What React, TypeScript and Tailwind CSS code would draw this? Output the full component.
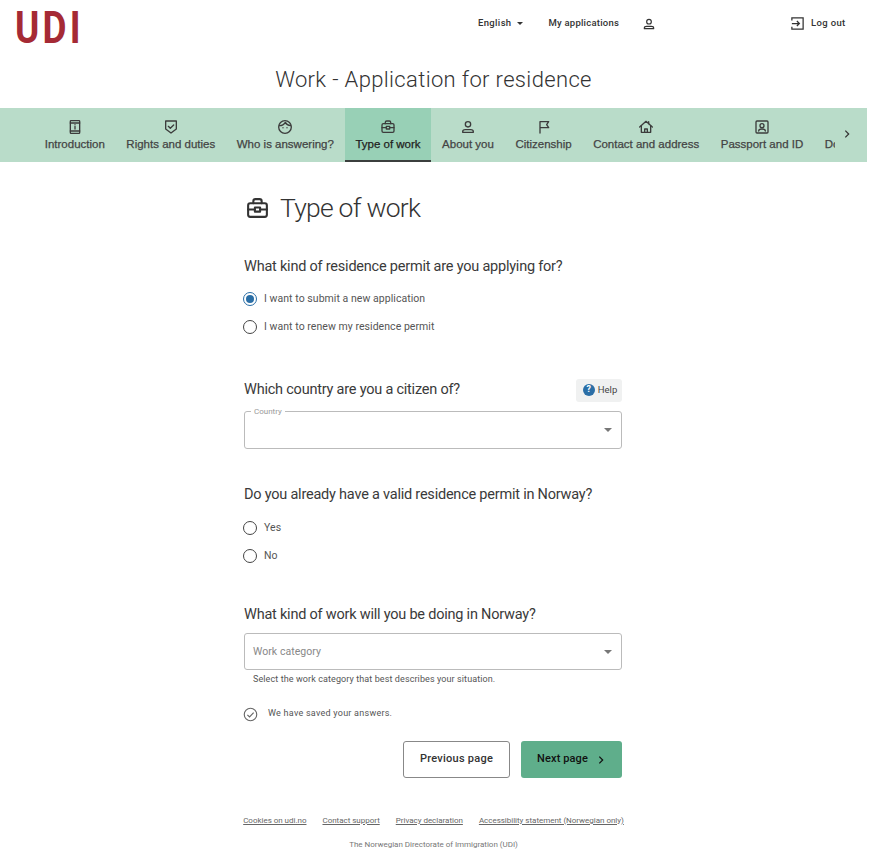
import { ReactNode } from 'react';

const headingFont = "font-['Roboto',sans-serif]";

function Icon({ className, children }: { className?: string; children: ReactNode }) {
  return (
    <svg
      viewBox="0 0 24 24"
      fill="none"
      stroke="currentColor"
      strokeWidth="2"
      strokeLinecap="round"
      strokeLinejoin="round"
      className={className}
    >
      {children}
    </svg>
  );
}

const icons: Record<string, ReactNode> = {
  intro: (
    <>
      <rect x="5" y="2.500" width="14" height="19" rx="1" />
      <path d="M5 6h14M5 18h14M12 11v4M12 8.600v.2" />
    </>
  ),
  rights: (
    <>
      <path d="M4 3h16v12l-8 6-8-6z" />
      <path d="M8 11l3 3 5-5" />
    </>
  ),
  face: (
    <>
      <circle cx="12" cy="12" r="9.500" />
      <path d="M3.500 10c4 0 7-1.500 9-5 1.500 3 4 4.500 8 5" />
      <path d="M9 13v.2M15 13v.2" />
    </>
  ),
  work: (
    <>
      <rect x="3" y="7" width="18" height="13" rx="2" />
      <path d="M8 7V5a2 2 0 0 1 2-2h4a2 2 0 0 1 2 2v2M3 13h6M15 13h6" />
      <rect x="9.500" y="11" width="5" height="4" />
    </>
  ),
  person: (
    <>
      <circle cx="12" cy="8" r="4" />
      <path d="M4 20v-1c0-2 2-3 4-3h8c2 0 4 1 4 3v1z" />
    </>
  ),
  flag: <path d="M6 21V4h13l-3 4.500 3 4.500H6" />,
  home: (
    <>
      <path d="M2.500 12L12 3.500 21.500 12" />
      <path d="M5 10v10h14V10M10 20v-5h4v5M16 4v3" />
    </>
  ),
  passport: (
    <>
      <rect x="3" y="3" width="18" height="18" rx="1.500" />
      <circle cx="12" cy="10" r="3" />
      <path d="M7 18c0-2 2-3 5-3s5 1 5 3" />
    </>
  ),
};

const steps = [
  { label: 'Introduction', icon: 'intro' },
  { label: 'Rights and duties', icon: 'rights' },
  { label: 'Who is answering?', icon: 'face' },
  { label: 'Type of work', icon: 'work', active: true },
  { label: 'About you', icon: 'person' },
  { label: 'Citizenship', icon: 'flag' },
  { label: 'Contact and address', icon: 'home' },
  { label: 'Passport and ID', icon: 'passport' },
  { label: 'Documents', icon: 'intro' },
];

function Radio({ label, checked }: { label: string; checked?: boolean }) {
  return (
    <div className="flex h-7 items-center">
      <span
        className={`ml-[-1px] flex h-[14px] w-[14px] items-center justify-center rounded-full border-[1.500px] ${
          checked ? 'border-[#2a6ea6]' : 'border-[#444]'
        }`}
      >
        {checked && <span className="h-2 w-2 rounded-full bg-[#2a6ea6]" />}
      </span>
      <span className="ml-[7px] font-['Roboto',sans-serif] text-[10.500px] tracking-[0.05px] text-[#555]">
        {label}
      </span>
    </div>
  );
}

function Question({ children }: { children: ReactNode }) {
  return (
    <h2 className={`${headingFont} whitespace-nowrap text-[14.500px] leading-5 tracking-[-0.22px] text-[#3a3a3a]`}>
      {children}
    </h2>
  );
}

function Caret() {
  return <span className="h-0 w-0 border-x-[4px] border-t-[4px] border-x-transparent border-t-[#777]" />;
}

export default function App() {
  return (
    <div className="h-[867px] w-[873px] overflow-hidden bg-white font-['Liberation_Sans',Arial,sans-serif]">
      <div className="w-[867px]">
        {/* Top bar */}
        <header className="flex h-[56px] items-start pt-[12px]">
          <div className="w-[78px]">
            <div className={`${headingFont} ml-[15px] origin-left scale-x-[0.82] text-[45px] font-bold leading-[32px] tracking-[4px] text-[#a52a35]`}>
              UDI
            </div>
          </div>
          <div className="ml-[400px] mt-[4px] flex items-center font-['Roboto',sans-serif] text-[9.500px] font-medium tracking-[0.35px] text-[#333]">
            <span>English</span>
            <span className="ml-[5px] h-0 w-0 border-x-[3.500px] border-t-[3.500px] border-x-transparent border-t-[#333]" />
            <span className="ml-[26px] tracking-[0.22px]">My applications</span>
            <Icon className="ml-[23px] h-[14px] w-[14px]">{icons.person}</Icon>
            <svg viewBox="0 0 24 24" fill="none" stroke="currentColor" strokeWidth="2" className="ml-[134px] h-[15px] w-[15px]">
              <path d="M3 7V3h18v18H3v-4M3 12h12M11 8l4 4-4 4" />
            </svg>
            <span className="ml-[6px]">Log out</span>
          </div>
        </header>

        <h1 className={`${headingFont} h-[52px] pt-[9px] text-center text-[22px] font-light leading-[30px] tracking-[0.35px] text-[#333]`}>
          Work - Application for residence
        </h1>

        {/* Step nav */}
        <nav className="relative h-[54px] bg-[#b9dcc9]">
          <div className="ml-[34px] flex h-full w-[801px] overflow-hidden">
            {steps.map((step) => (
              <div
                key={step.label}
                className={`flex h-full shrink-0 flex-col items-center px-[10.750px] pt-[11px] ${
                  step.active ? 'border-b-2 border-[#3b3f3d] bg-[#98d0b6] text-[#222]' : 'text-[#444]'
                }`}
              >
                <Icon className="h-[16px] w-[16px] text-[#3c3c3c]">{icons[step.icon]}</Icon>
                <span className="mt-[2px] whitespace-nowrap text-[11.500px] leading-[14px] [-webkit-text-stroke:0.25px]">
                  {step.label}
                </span>
              </div>
            ))}
          </div>
          <svg viewBox="0 0 24 24" fill="none" stroke="#333" strokeWidth="3" className="absolute left-[842px] top-[21px] h-[10px] w-[10px]">
            <path d="M8 4l8 8-8 8" />
          </svg>
        </nav>

        <main className="ml-[244px] w-[378px]">
          <div className="mt-[31px] flex h-[30px] items-center">
            <Icon className="ml-[1px] h-[25px] w-[25px] text-[#333]">{icons.work}</Icon>
            <span className={`${headingFont} ml-[10px] text-[26.500px] font-light tracking-[-0.75px] text-[#333]`}>
              Type of work
            </span>
          </div>

          <div className="mt-[34px]">
            <Question>What kind of residence permit are you applying for?</Question>
          </div>
          <div className="mt-[8px]">
            <Radio label="I want to submit a new application" checked />
            <Radio label="I want to renew my residence permit" />
          </div>

          <div className="mt-[37px] flex h-[24px] items-center justify-between">
            <Question>Which country are you a citizen of?</Question>
            <button className="flex h-[23px] w-[46px] items-center justify-center rounded-[3px] bg-[#f0f1f1] font-['Roboto',sans-serif] text-[9.500px] text-[#444]">
              <span className="mr-[3px] ml-[2px] flex h-[12px] w-[12px] items-center justify-center rounded-full bg-[#2a6ea6] text-[9px] font-bold text-white">
                ?
              </span>
              Help
            </button>
          </div>
          <div className="relative mt-[9px] flex h-[38px] items-center justify-end rounded-[3px] border border-[#bbb] pr-[9px]">
            <span className="absolute left-[6px] top-[-5px] bg-white px-[3px] font-['Roboto',sans-serif] text-[8px] leading-[9px] text-[#999]">
              Country
            </span>
            <Caret />
          </div>

          <div className="mt-[36px]">
            <Question>Do you already have a valid residence permit in Norway?</Question>
          </div>
          <div className="mt-[9px]">
            <Radio label="Yes" />
            <Radio label="No" />
          </div>

          <div className="mt-[35px]">
            <Question>What kind of work will you be doing in Norway?</Question>
          </div>
          <div className="mt-[8px] flex h-[37px] items-center justify-between rounded-[3px] border border-[#bbb] pl-[8px] pr-[9px] font-['Roboto',sans-serif] text-[10.500px] tracking-[0.05px] text-[#888]">
            Work category
            <Caret />
          </div>
          <p className="ml-[9px] mt-[2px] font-['Roboto',sans-serif] text-[9px] leading-[14px] tracking-[0.1px] text-[#555]">
            Select the work category that best describes your situation.
          </p>

          <div className="mt-[20px] flex h-[16px] items-center font-['Roboto',sans-serif] text-[9px] tracking-[0.25px] text-[#555]">
            <svg viewBox="0 0 24 24" fill="none" stroke="#666" strokeWidth="1.800" className="ml-[-1px] h-[15px] w-[15px]">
              <circle cx="12" cy="12" r="10" />
              <path d="M7 12.500l3.500 3.500L17 9" />
            </svg>
            <span className="ml-[10px]">We have saved your answers.</span>
          </div>

          <div className="mt-[19px] flex justify-end gap-[11px] font-['Roboto',sans-serif] text-[11px] font-medium tracking-[0.25px]">
            <button className="h-[37px] w-[107px] rounded-[3px] border border-[#888] text-[#333]">Previous page</button>
            <button className="flex h-[37px] w-[101px] items-center justify-center gap-[8px] rounded-[3px] bg-[#5fae8b] tracking-[0.1px] text-[#111]">
              Next page
              <svg viewBox="0 0 24 24" fill="none" stroke="#111" strokeWidth="3" className="h-[10px] w-[10px]">
                <path d="M8 4l8 8-8 8" />
              </svg>
            </button>
          </div>
        </main>

        <footer className="mt-[37px] font-['Roboto',sans-serif] text-[8px] tracking-[-0.02px] text-[#666]">
          <div className="flex justify-center gap-[16px] underline">
            <span>Cookies on udi.no</span>
            <span>Contact support</span>
            <span>Privacy declaration</span>
            <span>Accessibility statement (Norwegian only)</span>
          </div>
          <p className="mt-[12px] text-center text-[#777]">The Norwegian Directorate of Immigration (UDI)</p>
        </footer>
      </div>
    </div>
  );
}
